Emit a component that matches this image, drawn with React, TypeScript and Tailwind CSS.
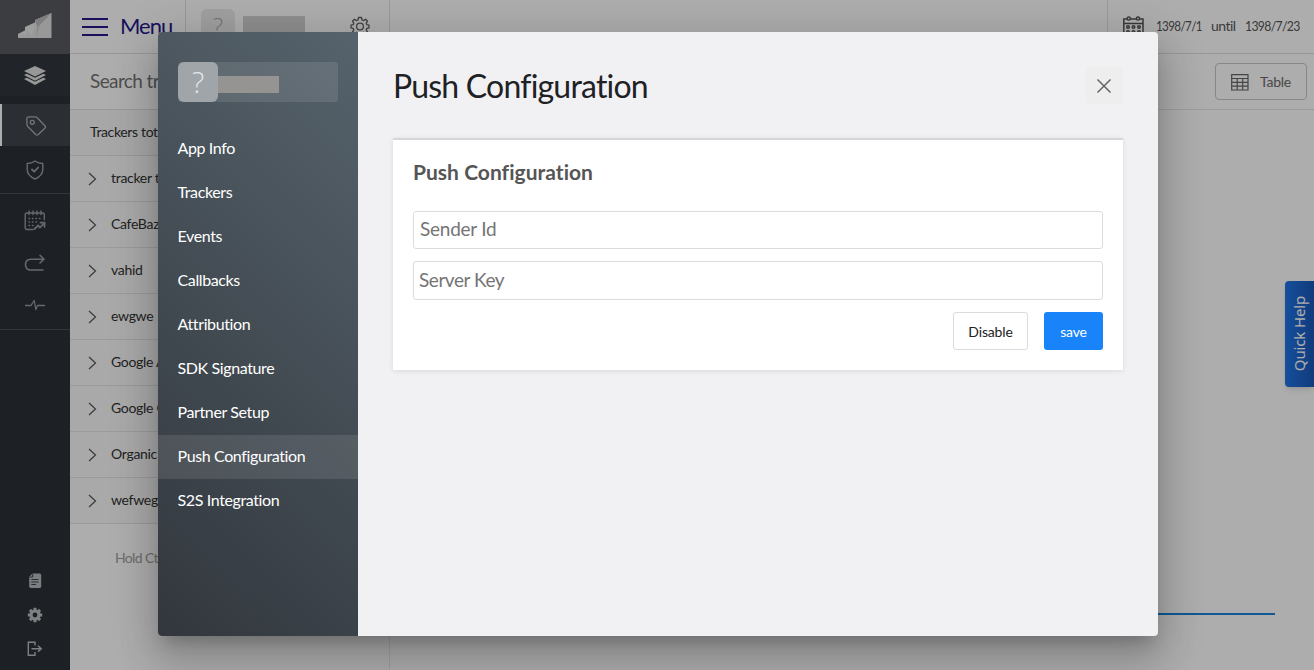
import React from "react";

const trackers = ["tracker te", "CafeBaza", "vahid", "ewgwe", "Google A", "Google C", "Organic", "wefweg"];
const sections = ["App Info", "Trackers", "Events", "Callbacks", "Attribution", "SDK Signature", "Partner Setup", "Push Configuration", "S2S Integration"];

function Logo() {
  return (
    <svg width="36" height="28" viewBox="0 0 36 28">
      <path d="M1 26V22L8 18.500V15L18 10.500V8L34.500 1V26Z" fill="#e0e0e0" />
      <path d="M18 8L34.500 1 22 14 19 26 20.500 15Z" fill="#bcbcbc" />
      <path d="M8 18.500L1 22V24L7 21 8 25 10 18 15 24 18 10.500 8 15Z" fill="#fff" opacity=".35" />
    </svg>
  );
}

function Layers() {
  return (
    <svg width="24" height="22" viewBox="0 0 24 22" fill="#e0e0e0">
      <path d="M12 1L23 6 12 11.500 1 6Z" />
      <path d="M1 10L3.800 8.700 12 12.700 20.200 8.700 23 10 12 15.700Z" />
      <path d="M1 14L3.800 12.700 12 16.800 20.200 12.700 23 14 12 20Z" />
    </svg>
  );
}

function Tag() {
  return (
    <svg width="22" height="22" viewBox="0 0 22 22" fill="none" stroke="#aaaeb1" strokeWidth="1.300" strokeLinejoin="round">
      <path d="M2.500 2.500Q1.800 2.600 1.800 3.500L2 10Q2 10.800 3 11.800L11 19.800Q12 20.500 13 19.800L20.300 12.800Q21 12 20.300 11.200L12.200 2.800Q11.500 2 10.300 1.900L3.600 1.800Z" />
      <circle cx="7.300" cy="7.300" r="2" />
    </svg>
  );
}

function Shield() {
  return (
    <svg width="18" height="20" viewBox="0 0 18 20" fill="none" stroke="#9a9ea2" strokeWidth="1.400" strokeLinejoin="round" strokeLinecap="round">
      <path d="M9 1C6.500 2.800 4 3.400 1.200 3.500V9.500C1.200 14 4.500 17 9 19 13.500 17 16.800 14 16.800 9.500V3.500C14 3.400 11.500 2.800 9 1Z" />
      <path d="M6 9.500L8.200 11.700 12.200 7.500" strokeWidth="1.800" />
    </svg>
  );
}

function TrendCalendar() {
  return (
    <svg width="22" height="22" viewBox="0 0 22 22" fill="none" stroke="#969a9e" strokeWidth="1.400" strokeLinecap="round">
      <path d="M9 19.500H3Q1.200 19.500 1.200 17.700V5Q1.200 3 3 3H18.500Q20.300 3 20.300 5V9.500M5 1V4.500M9 1V4.500M13 1V4.500M17 1V4.500" />
      <path d="M5 8.500H17M5 12H14M5 15.500H10" strokeDasharray="0.500 3" />
      <path d="M10.500 19L14 15.500 16 17.500 20.300 13M16.500 12.700H20.500V16.800" strokeWidth="1.800" />
    </svg>
  );
}

function ReturnArrow() {
  return (
    <svg width="22" height="18" viewBox="0 0 22 18" fill="none" stroke="#969a9e" strokeWidth="1.600" strokeLinecap="round" strokeLinejoin="round">
      <path d="M16 1.300L20 5.200 16 9M19.500 5.200H7Q1.500 5.200 1.500 10.500 1.500 16 7 16H19" />
    </svg>
  );
}

function Pulse() {
  return (
    <svg width="20" height="12" viewBox="0 0 20 12" fill="none" stroke="#969a9e" strokeWidth="1.300" strokeLinejoin="round">
      <path d="M0 6.500H6L7.500 4 9.200 1.500 10.800 10.500 12.500 6.500H20" />
    </svg>
  );
}

function DocumentIcon() {
  return (
    <svg width="14" height="16" viewBox="0 0 14 16">
      <path d="M4.500 .5H11.500Q13.200 .5 13.200 2V13.500Q13.200 15 11.500 15H3Q1.200 15 1.200 13.300V3.800Z" fill="#b6babd" />
      <path d="M1.500 4H4.700V.8M3.300 6.500H10.500M3.300 9H10.500M3.300 11.500H8" stroke="#30363c" strokeWidth=".9" fill="none" />
    </svg>
  );
}

const teeth = [0, 45, 90, 135, 180, 225, 270, 315];

function SolidGear() {
  return (
    <svg width="16" height="16" viewBox="0 0 16 16" fill="none" stroke="#babdc0">
      <circle cx="8" cy="8" r="4" strokeWidth="3.200" />
      {teeth.map((a) => <path key={a} d="M8 .8V3.500" strokeWidth="3" transform={`rotate(${a} 8 8)`} />)}
    </svg>
  );
}

function OutlineGear() {
  return (
    <svg width="20" height="20" viewBox="0 0 20 20" fill="none" stroke="#606060" strokeWidth="1.300" strokeLinejoin="round">
      <path d="M8.500 1.500H11.500L12 4 13.500 4.600 15.600 3.200 17.500 5.200 16.200 7.200 16.900 8.700 19 9.100V11.900L16.900 12.300 16.200 13.800 17.500 15.800 15.500 17.700 13.500 16.400 12 17 11.500 19.300H8.500L8 17 6.500 16.400 4.500 17.700 2.500 15.800 3.800 13.800 3.200 12.300 1 11.900V9.100L3.200 8.700 3.800 7.200 2.500 5.200 4.400 3.200 6.500 4.600 8 4Z" />
      <circle cx="10" cy="10.500" r="3.400" />
    </svg>
  );
}

function Logout() {
  return (
    <svg width="16" height="16" viewBox="0 0 16 16" fill="none" stroke="#babdc0" strokeWidth="1.400">
      <path d="M8 4.500V1.300H1.300V14.300H8V11M4.500 7.800H14M11 4.800L14.300 7.800 11 10.800" />
    </svg>
  );
}

function Calendar() {
  return (
    <svg width="21" height="22" viewBox="0 0 21 22" fill="none" stroke="#555" strokeWidth="1.500">
      <path d="M.8 20V3H4M7.500 3H13M16.800 3H20V20M.8 7.500H20" />
      <circle cx="5.800" cy="2.500" r="1.600" /><circle cx="15" cy="2.500" r="1.600" />
      {[5, 10.5, 16].map((x) => [11, 16].map((y) => <circle key={x + "-" + y} cx={x} cy={y} r="1.300" />))}
    </svg>
  );
}

function TableIcon() {
  return (
    <svg width="18" height="17" viewBox="0 0 18 17" fill="none" stroke="#666" strokeWidth="1.200">
      <path d="M.7 .7H17V16H.7ZM.7 4.500H17M.7 8.300H17M.7 12.200H17M6.200 4.500V16M11.700 4.500V16" />
    </svg>
  );
}

function Chevron() {
  return (
    <svg width="9" height="14" viewBox="0 0 9 14" fill="none" stroke="#555" strokeWidth="1.200"><path d="M1 1L7.500 7 1 13" /></svg>
  );
}

function NavRail() {
  return (
    <nav className="flex h-full w-[70px] shrink-0 flex-col bg-[#2b3239]">
      <div className="flex h-[54px] items-center justify-center bg-[#575b60] pb-[3px]"><Logo /></div>
      <div className="flex h-[42px] items-center justify-center bg-[#31373f] pt-[1px]"><Layers /></div>
      <div className="h-2" />
      <div className="flex h-[42px] items-center justify-center border-l-2 border-white bg-[#40454c] pt-[2px]"><Tag /></div>
      <div className="flex h-12 items-center justify-center border-b border-[#4a5057]"><Shield /></div>
      <div className="flex h-[136px] flex-col items-center border-b border-[#4a5057] pt-4">
        <TrendCalendar />
        <div className="mt-[22px]"><ReturnArrow /></div>
        <div className="mt-[27px]"><Pulse /></div>
      </div>
      <div className="mt-auto flex flex-col items-center gap-[18px] pb-[13px]">
        <DocumentIcon />
        <SolidGear />
        <Logout />
      </div>
    </nav>
  );
}

function Workspace() {
  return (
    <div className="flex h-full w-full bg-white">
      <NavRail />
      <div className="flex min-w-0 flex-1 flex-col">
        <header className="flex h-[54px] shrink-0 border-b border-[#e0e0e0]">
          <div className="flex w-[116px] items-center border-r border-[#e0e0e0] pl-3 text-[22px] text-[#27188a]">
            <div className="flex w-[26px] flex-col gap-[6px]">
              <i className="h-[2px] bg-[#27188a]" /><i className="h-[2px] bg-[#27188a]" /><i className="h-[2px] bg-[#27188a]" />
            </div>
            <span className="pb-[2px] pl-3 leading-6 tracking-[-1px]">Menu</span>
          </div>
          <div className="flex w-[204px] border-r border-[#e0e0e0]">
            <div className="mt-[9px] ml-[15px] flex h-10 w-[34px] justify-center rounded-md bg-[#eaeaea] font-['Open_Sans',sans-serif] text-2xl leading-[34px] font-light text-[#aaa]">?</div>
            <div className="mt-4 ml-2 h-[17px] w-[62px] bg-[#d2d2d2]" />
            <div className="mt-4 ml-[45px]"><OutlineGear /></div>
          </div>
          <div className="flex-1" />
          <div className="flex w-[207px] border-l border-[#e0e0e0] pt-4 pl-[15px] text-sm text-[#555]">
            <Calendar />
            <span className="ml-3 w-[55px]"><span className="inline-block origin-left scale-x-[0.83] tracking-[-0.75px]">1398/7/1</span></span>
            <span className="w-[34px] tracking-[-0.55px]">until</span>
            <span className="inline-block origin-left scale-x-[0.87] tracking-[-0.75px]">1398/7/23</span>
          </div>
        </header>
        <div className="flex min-h-0 flex-1">
          <aside className="w-[320px] border-r border-[#eaeaea] text-[#333]">
            <div className="flex h-14 items-center border-b border-[#e0e0e0] pl-5 text-[19px] tracking-[-0.6px] text-[#747474]">Search tra</div>
            <div className="flex h-[46px] items-center border-b border-[#e0e0e0] bg-[#f6f6f6] pb-[2px] pl-5 text-sm tracking-[-0.35px]">Trackers total</div>
            {trackers.map((name) => (
              <div key={name} className="flex h-[46px] items-center border-b border-[#e4e4e4] bg-[#f9f9f9] pl-[18px] text-sm tracking-[-0.3px] first-of-type:bg-white">
                <span className="pt-[1px]"><Chevron /></span><span className="pb-[2px] pl-[14px]">{name}</span>
              </div>
            ))}
            <p className="pt-6 pl-[45px] text-sm leading-5 tracking-[-0.65px] text-[#a0a0a0]">Hold Ctrl</p>
          </aside>
          <main className="min-w-0 flex-1">
            <div className="flex h-14 justify-end border-b border-[#e6e6e6] pt-[9px] pr-[7px]">
              <button className="flex h-[37px] w-[92px] items-center rounded border border-[#c7c7c7] pl-[15px] text-sm tracking-[-0.25px] text-[#6a6a6a]">
                <span className="pt-[2px]"><TableIcon /></span><span className="pl-[11px]">Table</span>
              </button>
            </div>
            <div className="mt-[503px] mr-[39px] h-[2px] bg-[#1983dc]" />
          </main>
        </div>
      </div>
    </div>
  );
}

export default function App() {
  return (
    <div className="relative h-[670px] w-[1314px] overflow-hidden font-[Lato,sans-serif]">
      <Workspace />
      <div className="absolute top-[281px] right-0 flex h-[106px] w-[29px] items-center justify-center rounded-l bg-linear-to-r from-[#2074e6] to-[#1958b8] shadow-md">
        <span className="rotate-180 font-['Noto_Sans',sans-serif] text-[15px] tracking-[-0.15px] whitespace-nowrap text-white [writing-mode:vertical-rl]">Quick Help</span>
      </div>
      <div className="absolute inset-0 bg-black/32" />
      <div className="absolute top-8 left-[158px] flex h-[604px] w-[1000px] overflow-hidden rounded bg-[#f1f1f4] shadow-[0_11px_15px_-7px_rgba(0,0,0,0.2),0_24px_38px_3px_rgba(0,0,0,0.14),0_9px_46px_8px_rgba(0,0,0,0.12)]">
        <aside className="w-[200px] bg-linear-45 from-[#32373d] to-[#56636c]">
          <div className="mt-[30px] ml-5 flex h-10 w-40 rounded-[3px] bg-white/10">
            <div className="flex w-10 justify-center rounded-md bg-[#a0a5a9] font-['Open_Sans',sans-serif] text-[29px] leading-10 font-light text-[#e4e6e8]">?</div>
            <div className="mt-[14px] h-[17px] w-[61px] bg-[#969492]" />
          </div>
          <ul className="mt-[25px] text-base tracking-[-0.38px] text-white">
            {sections.map((name) => (
              <li key={name} className={name === "Push Configuration" ? "bg-white/10" : ""}>
                <div className="flex h-11 items-center pb-[3px] pl-[19.5px]">{name}</div>
              </li>
            ))}
          </ul>
        </aside>
        <section className="flex flex-1 flex-col px-[35px] pt-[35px]">
          <div className="flex h-[37px] items-center justify-between">
            <h1 className="text-[32px] leading-10 tracking-[-0.8px] text-[#202124]">Push Configuration</h1>
            <button className="flex size-[37px] items-center justify-center rounded-[3px] bg-[#eeeeef] pr-[2px]">
              <svg width="16" height="16" viewBox="0 0 16 16" stroke="#666" strokeWidth="1.500"><path d="M1.500 1.500L14.500 14.500M14.500 1.500L1.500 14.500" /></svg>
            </button>
          </div>
          <div className="mt-[34px] h-[232px] border-t-2 border-[#d6d7d8] bg-white px-5 shadow-[0_1px_5px_rgba(0,0,0,0.1)]">
            <h2 className="pt-[18px] text-[21px] leading-7 font-bold tracking-[0.03px] text-[#555]">Push Configuration</h2>
            <input placeholder="Sender Id" className="mt-[25px] block h-[38px] w-full rounded-[3px] border border-[#dcdcdc] pb-[3px] pl-[6px] text-[19px] tracking-[-0.25px] placeholder:text-[#757575]" />
            <input placeholder="Server Key" className="mt-3 block h-[39px] w-full rounded-[3px] border border-[#dcdcdc] pb-[2px] pl-[5px] text-[19px] tracking-[-0.45px] placeholder:text-[#757575]" />
            <div className="mt-3 flex justify-end gap-4 text-sm tracking-[-0.15px]">
              <button className="h-[38px] w-[75px] rounded-[3px] border border-[#dcdcdc] pt-[1px] text-[#222]">Disable</button>
              <button className="h-[38px] w-[59px] rounded-[3px] bg-[#1983fa] pt-[1px] text-white">save</button>
            </div>
          </div>
        </section>
      </div>
    </div>
  );
}
